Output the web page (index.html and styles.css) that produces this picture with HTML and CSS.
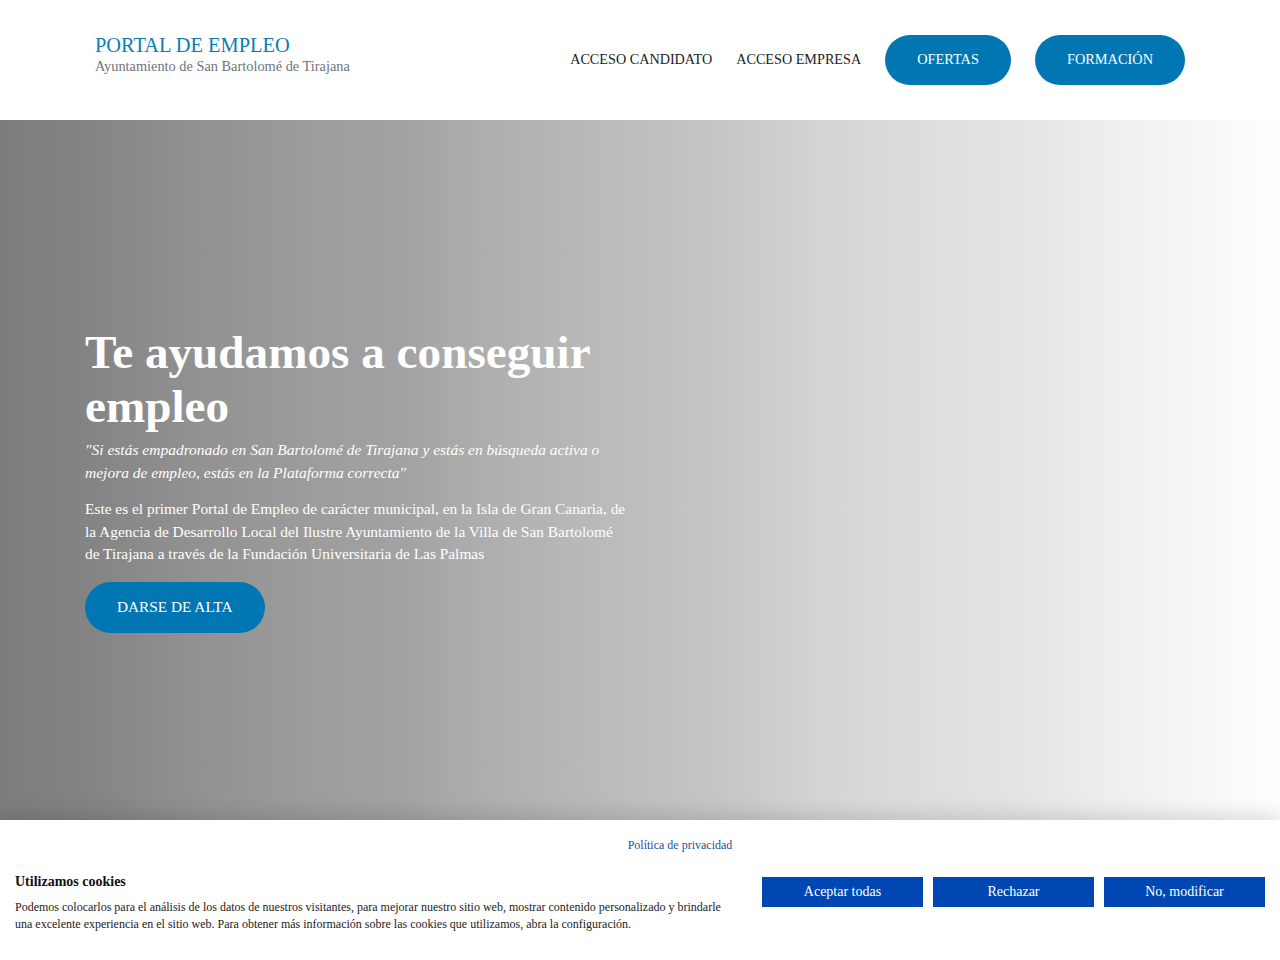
FILE: index.html
```html
<!DOCTYPE html>
<html lang="es">
<head>
    <meta charset="UTF-8">
    <meta name="viewport" content="width=device-width, initial-scale=1.0">
    <title>Portal de Empleo</title>
    <link rel="stylesheet" href="styles.css">
</head>
<body>
    <header class="cabecera">
        <div class="logo">
            <a href="#" class="logo-titulo">PORTAL DE EMPLEO</a>
            <span class="logo-sub">Ayuntamiento de San Bartolomé de Tirajana</span>
        </div>
        <nav class="menu">
            <a href="#" class="menu-link">ACCESO CANDIDATO</a>
            <a href="#" class="menu-link">ACCESO EMPRESA</a>
            <a href="#" class="btn-pill btn-ofertas">OFERTAS</a>
            <a href="#" class="btn-pill btn-formacion">FORMACIÓN</a>
        </nav>
    </header>

    <section class="hero">
        <div class="hero-contenido">
            <h1>Te ayudamos a conseguir empleo</h1>
            <p class="cita">"Si estás empadronado en San Bartolomé de Tirajana y estás en búsqueda activa o mejora de empleo, estás en la Plataforma correcta"</p>
            <p class="descripcion">Este es el primer Portal de Empleo de carácter municipal, en la Isla de Gran Canaria, de la Agencia de Desarrollo Local del Ilustre Ayuntamiento de la Villa de San Bartolomé de Tirajana a través de la Fundación Universitaria de Las Palmas</p>
            <a href="#" class="btn-pill btn-alta">DARSE DE ALTA</a>
        </div>
    </section>

    <!-- Aviso de cookies -->
    <div class="cookies">
        <a href="#" class="cookies-politica">Política de privacidad</a>
        <div class="cookies-fila">
            <div class="cookies-texto">
                <h2>Utilizamos cookies</h2>
                <p>Podemos colocarlos para el análisis de los datos de nuestros visitantes, para mejorar nuestro sitio web, mostrar contenido personalizado y brindarle una excelente experiencia en el sitio web. Para obtener más información sobre las cookies que utilizamos, abra la configuración.</p>
            </div>
            <div class="cookies-botones">
                <button>Aceptar todas</button>
                <button>Rechazar</button>
                <button>No, modificar</button>
            </div>
        </div>
    </div>
</body>
</html>
```

FILE: styles.css
```css
body {
    margin: 0;
    font-family: 'Liberation Serif', 'Times New Roman', serif;
    background: #fff;
    overflow: hidden;
    height: 960px;
}

a {
    text-decoration: none;
}

.cabecera {
    height: 120px;
    display: flex;
    align-items: center;
    justify-content: space-between;
    padding: 0 95px 0 95px;
    box-sizing: border-box;
    background: #fff;
}

.logo {
    display: flex;
    flex-direction: column;
    margin-top: -13px;
}

.logo-titulo {
    color: #0a7db5;
    font-size: 20.4px;
    line-height: 24px;
}

.logo-sub {
    color: #6f737a;
    font-size: 14.35px;
    line-height: 18px;
}

.menu {
    display: flex;
    align-items: center;
    gap: 24px;
}

.menu-link {
    color: #222;
    font-size: 14.2px;
    margin-top: -1px;
}

.btn-pill {
    display: inline-flex;
    align-items: center;
    justify-content: center;
    background: #0077b3;
    color: #fff;
    font-size: 14.35px;
    border-radius: 26px;
    height: 50px;
    padding: 0 32px;
    box-sizing: border-box;
}

.btn-ofertas,
.btn-formacion {
    padding-bottom: 2px;
}

.hero {
    height: 700px;
    background: linear-gradient(to right, #7c7c7c 0%, #858585 7.8%, #929292 15.6%, #9b9b9b 23.4%, #a2a2a2 31.3%, #ababab 36%, #b6b6b6 43.8%, #bebebe 50%, #c8c8c8 57.8%, #d3d3d3 63.3%, #dadada 68.8%, #dfdfdf 74.2%, #e4e4e4 79.7%, #ececec 85.2%, #f3f3f3 90.6%, #fbfbfb 96.9%, #fefefe 100%);
    display: flex;
    align-items: center;
}

.hero-contenido {
    width: 542px;
    margin-left: 85px;
    margin-top: 18px;
    color: #fff;
}

.hero h1 {
    font-size: 47.2px;
    line-height: 54px;
    font-weight: bold;
    margin: 0 0 5px 0;
}

.cita {
    font-style: italic;
    font-size: 15.5px;
    line-height: 23px;
    margin: 0 0 14px 0;
}

.descripcion {
    font-size: 15.4px;
    line-height: 22.5px;
    margin: 0 0 16px 0;
}

.btn-alta {
    height: 51px;
    font-size: 15.3px;
    padding: 0 32px 1px;
}

.cookies {
    position: absolute;
    left: 0;
    right: 0;
    top: 820px;
    height: 140px;
    background: #fff;
    box-shadow: 0 -6px 18px rgba(0, 0, 0, 0.12);
    display: flex;
    flex-direction: column;
    padding: 0 15px;
}

.cookies-politica {
    align-self: center;
    margin-left: 80px;
    color: #1d4f9e;
    font-size: 12px;
    margin-top: 18px;
}

.cookies-fila {
    display: flex;
    align-items: flex-start;
    justify-content: space-between;
    margin-top: 21px;
}

.cookies-texto {
    width: 720px;
}

.cookies-texto h2 {
    font-size: 14px;
    color: #111;
    margin: 0 0 9px 0;
}

.cookies-texto p {
    font-size: 12px;
    line-height: 17px;
    color: #222;
    margin: 0;
}

.cookies-botones {
    display: flex;
    gap: 10px;
    margin-top: 3px;
}

.cookies-botones button {
    width: 161px;
    height: 30px;
    border: none;
    background: #0047b3;
    color: #fff;
    font-family: 'Liberation Serif', 'Times New Roman', serif;
    font-size: 14px;
    cursor: pointer;
}
```
